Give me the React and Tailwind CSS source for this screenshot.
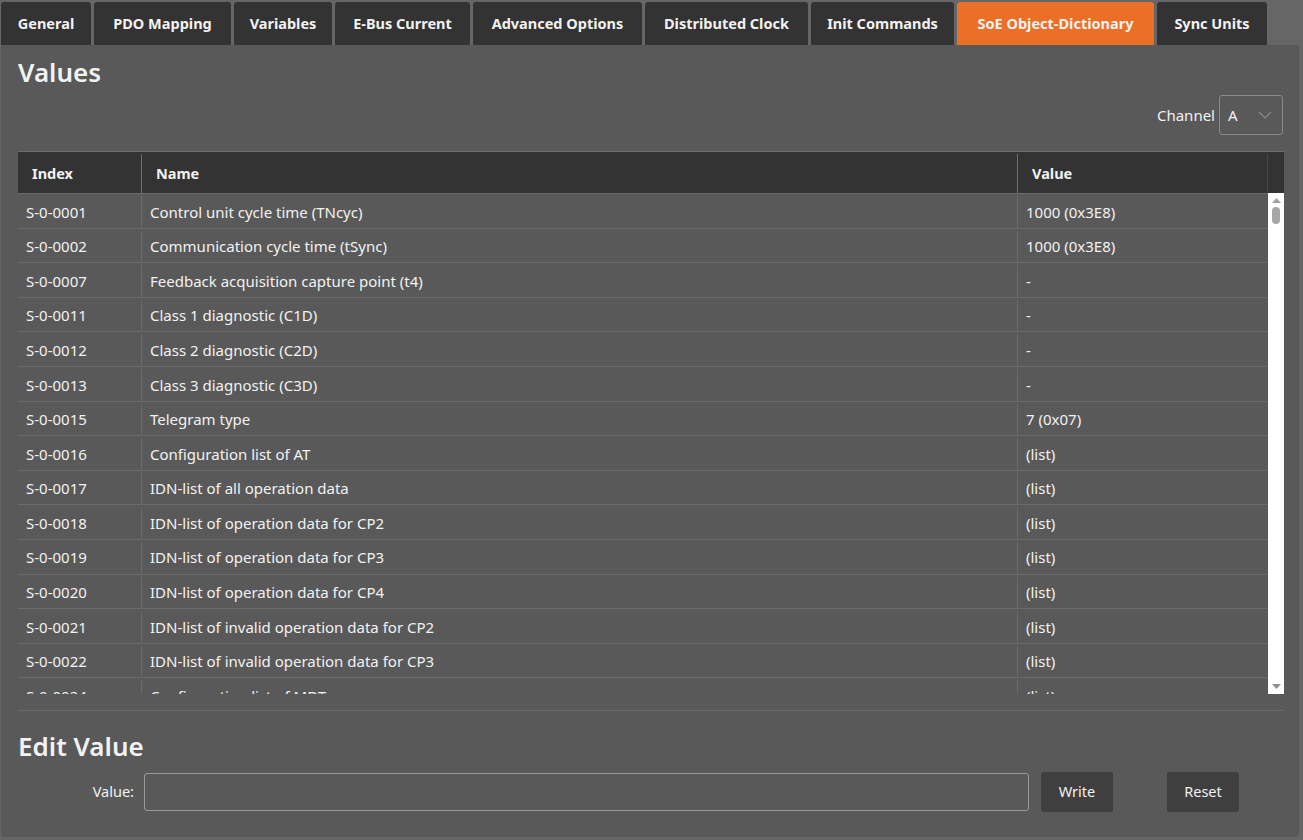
import React from 'react';

const tabs = [
  ['General', 'w-[90px]'],
  ['PDO Mapping', 'w-[137px]'],
  ['Variables', 'w-[98px]'],
  ['E-Bus Current', 'w-[135px]'],
  ['Advanced Options', 'w-[169px]'],
  ['Distributed Clock', 'w-[163px]'],
  ['Init Commands', 'w-[143px]'],
  ['SoE Object-Dictionary', 'w-[197px]'],
  ['Sync Units', 'w-[110px]'],
];

const rows = [
  ['S-0-0001', 'Control unit cycle time (TNcyc)', '1000 (0x3E8)'],
  ['S-0-0002', 'Communication cycle time (tSync)', '1000 (0x3E8)'],
  ['S-0-0007', 'Feedback acquisition capture point (t4)', '-'],
  ['S-0-0011', 'Class 1 diagnostic (C1D)', '-'],
  ['S-0-0012', 'Class 2 diagnostic (C2D)', '-'],
  ['S-0-0013', 'Class 3 diagnostic (C3D)', '-'],
  ['S-0-0015', 'Telegram type', '7 (0x07)'],
  ['S-0-0016', 'Configuration list of AT', '(list)'],
  ['S-0-0017', 'IDN-list of all operation data', '(list)'],
  ['S-0-0018', 'IDN-list of operation data for CP2', '(list)'],
  ['S-0-0019', 'IDN-list of operation data for CP3', '(list)'],
  ['S-0-0020', 'IDN-list of operation data for CP4', '(list)'],
  ['S-0-0021', 'IDN-list of invalid operation data for CP2', '(list)'],
  ['S-0-0022', 'IDN-list of invalid operation data for CP3', '(list)'],
  ['S-0-0024', 'Configuration list of MDT', '(list)'],
];

function App() {
  return (
    <div
      className="w-[1303px] h-[840px] bg-[#666666] text-[#f2f2f2] flex flex-col pl-px pt-[2px] overflow-hidden"
      style={{ fontFamily: '"Noto Sans", "Open Sans", sans-serif' }}
    >
      {/* tabs */}
      <div className="flex gap-[3px] h-[43px]">
        {tabs.map(([t, w]) => (
          <div
            key={t}
            className={
              w +
              ' flex items-center justify-center rounded-t-[3px] text-[14.5px] font-bold whitespace-nowrap ' +
              (t === 'SoE Object-Dictionary' ? 'bg-[#eb6f27]' : 'bg-[#333333]')
            }
          >
            {t}
          </div>
        ))}
      </div>

      <div className="w-[1298px] h-[792px] bg-[#595959] rounded-b-[3px] px-[17px] flex flex-col">
        <h2 className="text-[26px] font-semibold leading-none mt-[14px]">Values</h2>

        <div className="flex justify-end items-center gap-[4px] mt-[10px] mr-[-1px]">
          <span className="text-[15px]">Channel</span>
          <div className="w-[64px] h-[40px] border border-[#8a8a8a] rounded-[3px] flex items-center justify-between pl-[8px] pr-[10px]">
            <span className="text-[15px]">A</span>
            <svg width="14" height="8" viewBox="0 0 14 8">
              <path d="M1 1 L7 7 L13 1" fill="none" stroke="#8a8a8a" strokeWidth="1.2" />
            </svg>
          </div>
        </div>

        {/* table */}
        <div className="mt-[16px] w-[1266px] flex flex-col">
          <div className="flex h-[42px] bg-[#333333] border-t border-[#6e6e6e] text-[14.5px] font-bold pt-[2px]">
            <div className="w-[124px] pl-[14px] flex items-center border-r border-[#6e6e6e]">Index</div>
            <div className="w-[876px] pl-[14px] flex items-center border-r border-[#6e6e6e]">Name</div>
            <div className="w-[250px] pl-[14px] flex items-center border-r border-[#474747]">Value</div>
            <div className="flex-1" />
          </div>
          <div className="flex h-[501px] overflow-hidden">
            <div className="w-[1250px] flex flex-col">
              {rows.map((r) => (
                <div key={r[0]} className="flex shrink-0 h-[34.6px] border-t border-[#6b6b6b] text-[15px] pt-[2px]">
                  <div className="w-[124px] pl-[8px] flex items-center border-r border-[#6b6b6b]">{r[0]}</div>
                  <div className="w-[876px] pl-[8px] flex items-center border-r border-[#6b6b6b]">{r[1]}</div>
                  <div className="flex-1 pl-[8px] flex items-center">{r[2]}</div>
                </div>
              ))}
            </div>
            <div className="w-[16px] bg-white flex flex-col items-center justify-between py-[5px]">
              <div className="flex flex-col items-center gap-[4px]">
                <svg width="9" height="5" viewBox="0 0 9 5">
                  <path d="M0 5 L4.5 0 L9 5 Z" fill="#a0a0a0" />
                </svg>
                <div className="w-[8px] h-[17px] rounded-full bg-[#a6a6a6]" />
              </div>
              <svg width="9" height="5" viewBox="0 0 9 5">
                <path d="M0 0 L4.5 5 L9 0 Z" fill="#8f8f8f" />
              </svg>
            </div>
          </div>
          <div className="h-px bg-[#6b6b6b] mt-[16px]" />
        </div>

        <h2 className="text-[26px] font-semibold leading-none mt-[22px]">Edit Value</h2>

        <div className="flex items-center mt-[13px]">
          <label className="w-[126px] text-right text-[14.5px] pr-[10px]">Value:</label>
          <input className="w-[885px] h-[38px] border border-[#9a9a9a] rounded-[3px] bg-transparent outline-none px-2" />
          <button className="ml-[12px] w-[72px] h-[40px] bg-[#3f3f3f] rounded-[3px] text-[14.5px]">Write</button>
          <button className="ml-[54px] w-[72px] h-[40px] bg-[#3f3f3f] rounded-[3px] text-[14.5px]">Reset</button>
        </div>
      </div>
    </div>
  );
}

export default App;
